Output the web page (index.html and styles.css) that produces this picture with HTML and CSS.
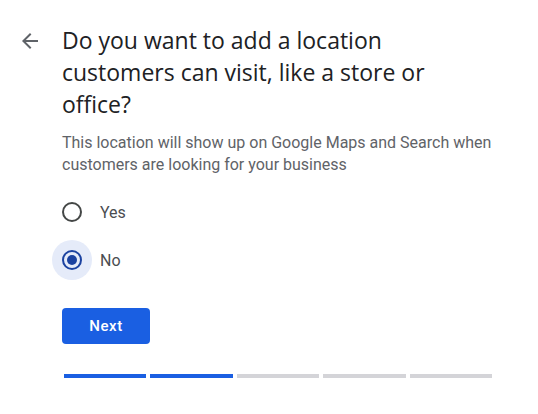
FILE: index.html
```html
<!DOCTYPE html>
<html lang="en">
<head>
<meta charset="utf-8">
<link rel="stylesheet" href="styles.css">
</head>
<body>
<div class="page">
  <div class="back">
    <svg width="24" height="24" viewBox="0 0 24 24"><path d="M20 11H7.83l5.59-5.59L12 4l-8 8 8 8 1.41-1.41L7.83 13H20v-2z" fill="#5f6368"/></svg>
  </div>
  <div class="content">
    <h1 class="title">Do you want to add a location customers can visit, like a store or office?</h1>
    <p class="desc">This location will show up on Google Maps and Search when customers are looking for your business</p>
    <div class="options">
      <label class="option">
        <span class="radio-wrap"><span class="radio"></span></span>
        <span class="label">Yes</span>
      </label>
      <label class="option">
        <span class="radio-wrap selected"><span class="radio checked"></span></span>
        <span class="label">No</span>
      </label>
    </div>
    <button class="next">Next</button>
    <div class="progress">
      <span class="seg done"></span>
      <span class="seg done"></span>
      <span class="seg"></span>
      <span class="seg"></span>
      <span class="seg"></span>
    </div>
  </div>
</div>
</body>
</html>
```
FILE: styles.css
```css
* { box-sizing: border-box; }
html, body { margin: 0; padding: 0; background: #fff; }
body { font-family: Roboto, "Liberation Sans", sans-serif; }
.page {
  display: flex;
  padding: 29px 0 0 18px;
}
.back { width: 44px; flex: none; height: 24px; }
.back svg { display: block; }
.content { width: 440px; margin-top: -5px; }
.title {
  margin: 0;
  font-family: "Open Sans", sans-serif;
  font-weight: 400;
  font-size: 23px;
  line-height: 32px;
  color: #202124;
  width: 375px;
}
.desc {
  margin: 12px 0 0;
  font-size: 16px;
  line-height: 22px;
  color: #5f6368;
}
.options { margin-top: 12px; display: flex; flex-direction: column; }
.option { display: flex; align-items: center; height: 48px; margin-left: -10px; }
.radio-wrap {
  width: 40px; height: 40px; border-radius: 50%;
  display: flex; align-items: center; justify-content: center;
}
.radio-wrap.selected { background: #e5ebf9; }
.radio {
  width: 20px; height: 20px; border-radius: 50%;
  border: 2px solid #444746;
  display: flex; align-items: center; justify-content: center;
}
.radio.checked { border-color: #1b42a0; }
.radio.checked::after {
  content: ""; width: 10px; height: 10px; border-radius: 50%; background: #1b42a0;
}
.label { margin-left: 8px; font-size: 16px; color: #4a4d51; }
.next {
  margin-top: 24px;
  width: 88px; height: 36px;
  border: none; border-radius: 4px;
  background: #1a5fe2; color: #fff;
  font-family: Roboto, sans-serif; font-size: 15px; font-weight: 500;
  letter-spacing: 0.6px;
  display: block;
}
.progress { margin: 30px 0 0 2px; display: flex; gap: 4px; width: 428px; }
.seg { flex: 1; height: 4px; background: #d4d4d8; }
.seg.done { background: #1a5fe2; }
```
